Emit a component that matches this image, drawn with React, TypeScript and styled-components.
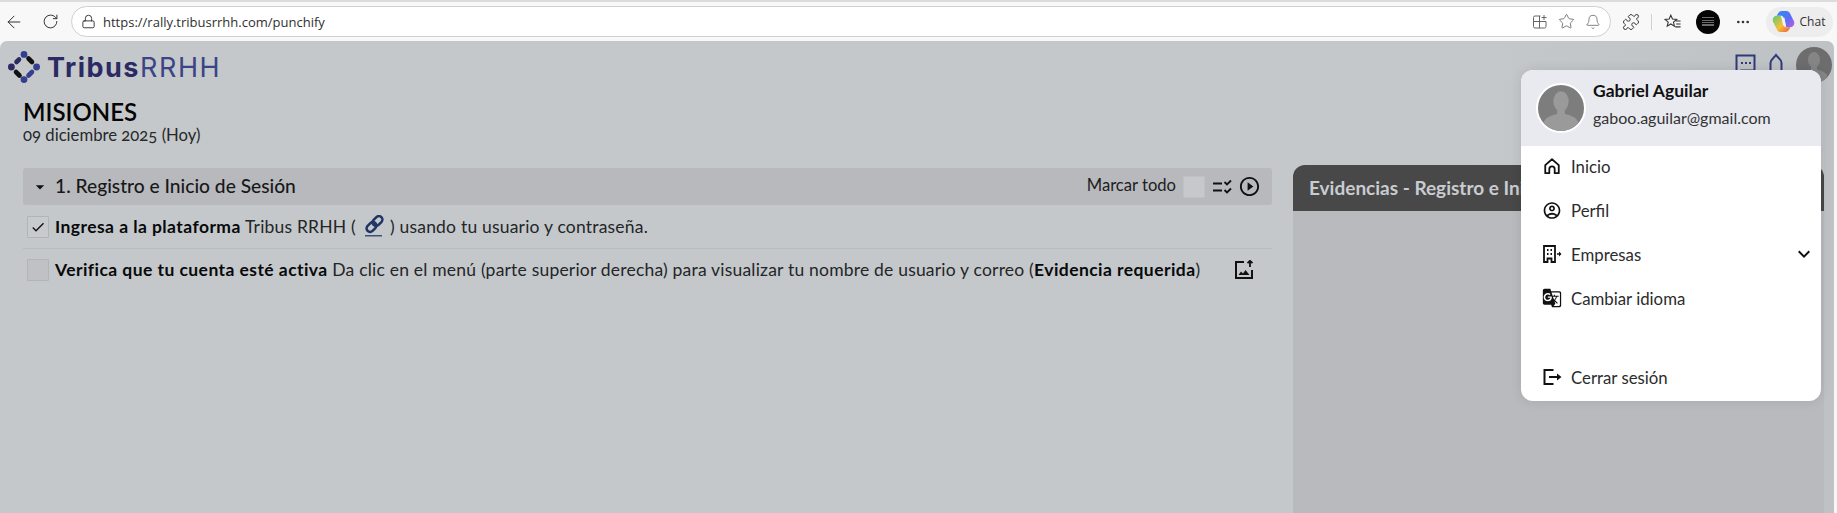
import styled, { createGlobalStyle } from 'styled-components';
import { ArrowLeft, RotateCw, Lock, Star, Bell, Puzzle, Ellipsis } from 'lucide-react';
import {
  MdArrowDropDown,
  MdCheck,
  MdExpandMore,
  MdGTranslate,
  MdOutlineAccountCircle,
  MdPlayCircleOutline,
} from 'react-icons/md';

const FONT = `'Lato', 'Open Sans', sans-serif`;

const GlobalStyle = createGlobalStyle`
  html, body { margin: 0; padding: 0; background: #f7f7f7; overflow: hidden; }
  * { box-sizing: border-box; }
`;

// ---------- browser chrome ----------
const Frame = styled.div`
  width: 1837px;
  height: 513px;
  display: flex;
  flex-direction: column;
  font-family: ${FONT};
  position: relative;
  overflow: hidden;
`;

const Chrome = styled.div`
  height: 41px;
  flex: none;
  background: #f8f8f8;
  border-top: 2px solid #dcdcdc;
  display: flex;
  align-items: center;
  padding: 0 4px 0 4px;
  color: #333;
  font-family: 'Open Sans', sans-serif;
`;

const ChromeBtn = styled.span<{ $w?: number; $ml?: number }>`
  width: ${({ $w }) => $w ?? 36}px;
  margin-left: ${({ $ml }) => $ml ?? 0}px;
  display: flex;
  justify-content: center;
  align-items: center;
  flex: none;
`;

const AddressBar = styled.div`
  width: 1540px;
  height: 31px;
  flex: none;
  background: #fff;
  border: 1px solid #d0d0d0;
  border-radius: 16px;
  display: flex;
  align-items: center;
  padding: 0 9px 0 9px;
  font-family: 'Open Sans', sans-serif;
`;

const Url = styled.span`
  flex: 1;
  margin-left: 7px;
  font-size: 13px;
  color: #303030;
`;

const BarIcons = styled.div`
  display: flex;
  align-items: center;
  gap: 10px;
  color: #666;
`;

const Separator = styled.span`
  width: 1px;
  height: 16px;
  background: #d0d0d0;
  margin-right: 12px;
  flex: none;
`;

const ProfileDot = styled.span`
  width: 24px;
  height: 24px;
  border-radius: 50%;
  background: #050505;
  margin-left: 14px;
  display: flex;
  align-items: center;
  justify-content: center;
  flex: none;

  &::after {
    content: '';
    width: 12px;
    height: 10px;
    background: repeating-linear-gradient(#6a6a6a 0 1px, #050505 1px 2.5px);
  }
`;

const ChatPill = styled.div`
  width: 69px;
  height: 30px;
  margin-left: auto;
  border-radius: 15px;
  background: #ededed;
  display: flex;
  align-items: center;
  gap: 5px;
  padding-left: 6px;
  font-family: 'Open Sans', sans-serif;
  font-size: 12px;
  color: #333;
`;

// ---------- page ----------
const Page = styled.div`
  flex: 1;
  margin-right: 3px;
  background: linear-gradient(90deg, #c4c8cb 0%, #c4c8cb 80%, #bfc2c5 100%);
  border-radius: 7px 7px 0 0;
  padding: 6px 2px 0 8px;
  min-height: 0;
`;

const TopBar = styled.div`
  display: flex;
  align-items: center;
  height: 36px;
`;

const Logo = styled.div`
  display: flex;
  align-items: center;
  gap: 7px;
  flex: 1;
  margin-top: 4px;
`;

const LogoText = styled.span`
  font-family: 'Inter', sans-serif;
  font-size: 27px;
  letter-spacing: 1.5px;
  line-height: 1;
  font-weight: 700;
  color: #2c2a63;
`;

const LogoLight = styled.span`
  font-weight: 400;
  letter-spacing: 1.6px;
  color: #3a4486;
`;

const TopIcons = styled.div`
  display: flex;
  align-items: center;
  gap: 13px;
  color: #2f3a78;
`;

const TopAvatar = styled.div`
  width: 36px;
  height: 36px;
  border-radius: 50%;
  background: #6d6d6d;
  overflow: hidden;
`;

const Heading = styled.div`
  padding-left: 15px;
  margin-top: 15px;
`;

const Title = styled.h1`
  margin: 0;
  font-size: 24px;
  line-height: 27px;
  font-weight: 600;
  color: #050505;
`;

const DateText = styled.div`
  font-size: 16.7px;
  line-height: 19px;
  margin-top: 1px;
  color: #26282a;
  font-variant-numeric: oldstyle-nums;
`;

const Content = styled.div`
  display: flex;
  align-items: flex-start;
  margin-top: 20px;
  padding-left: 15px;
`;

const Missions = styled.div`
  width: 1249px;
  flex: none;
  margin-top: 3px;
`;

const SectionHeader = styled.div`
  height: 37px;
  background: #b8b9bc;
  border-radius: 3px;
  display: flex;
  align-items: center;
  padding: 0 11px 0 7px;
`;

const SectionTitle = styled.span`
  flex: 1;
  margin-left: 5px;
  padding-bottom: 3px;
  font-size: 19.2px;
  font-weight: 500;
  color: #17181a;
`;

const MarkAll = styled.span`
  font-size: 16.6px;
  padding-bottom: 3px;
  color: #1c1d1f;
  margin-right: 7px;
`;

const Box = styled.span<{ $checked?: boolean }>`
  width: 22px;
  height: 22px;
  flex: none;
  display: inline-flex;
  align-items: center;
  justify-content: center;
  border: 1px solid #b2b4b7;
  border-radius: 1px;
  background: ${({ $checked }) => ($checked ? '#c8cbce' : '#c0c1c4')};
  color: #111;
`;

const HeaderBox = styled(Box)`
  background: #c6c8cb;
  border-color: #bfc1c3;
`;

const HeaderIcons = styled.span`
  display: flex;
  align-items: center;
  gap: 6px;
  margin-left: 7px;
  color: #111;
`;

const Task = styled.div<{ $divider?: boolean }>`
  display: flex;
  align-items: center;
  gap: 6px;
  padding: 10px 0 10px 4px;
  height: ${({ $divider }) => ($divider ? 44 : 42)}px;
  border-bottom: ${({ $divider }) => ($divider ? '1px solid #b9bbbe' : 'none')};
  font-size: 17.5px;
  letter-spacing: 0.2px;
  color: #232527;
`;

const TaskText = styled.span`
  flex: 1;
  display: flex;
  align-items: center;
  white-space: pre;
  padding-bottom: 1px;

  b {
    font-weight: 700;
    letter-spacing: 0.44px;
    color: #08090a;
  }
`;

const LinkMark = styled.svg`
  margin: 0 6px 0 8px;
`;

const UploadBtn = styled.span`
  display: flex;
  margin-right: 18px;
  color: #111;
`;

const EvidencePanel = styled.div`
  width: 531px;
  height: 400px;
  margin-left: 21px;
  flex: none;
  border-radius: 12px 12px 0 0;
  background: #b9babd;
  overflow: hidden;
`;

const EvidenceHeader = styled.div`
  height: 46px;
  background: #484848;
  color: #c8ccd0;
  font-size: 19px;
  font-weight: 700;
  line-height: 46px;
  padding-left: 16px;
`;

// ---------- user menu ----------
const Menu = styled.div`
  position: absolute;
  left: 1521px;
  top: 70px;
  width: 300px;
  height: 331px;
  border-radius: 12px;
  background: #fff;
  box-shadow: 0 0 12px rgba(0, 0, 0, 0.1);
  overflow: hidden;
  display: flex;
  flex-direction: column;
`;

const MenuHeader = styled.div`
  height: 76px;
  flex: none;
  background: #e8eaef;
  display: flex;
  align-items: center;
  padding-left: 15px;
  gap: 7px;
`;

const MenuAvatar = styled.div`
  width: 50px;
  height: 50px;
  border-radius: 50%;
  border: 2px solid #fff;
  background: #7d7d7d;
  overflow: hidden;
  flex: none;
`;

const UserName = styled.div`
  font-size: 17.5px;
  font-weight: 700;
  color: #111;
  line-height: 20px;
  margin-top: -8px;
`;

const UserMail = styled.div`
  font-size: 16px;
  color: #333;
  line-height: 20px;
  margin-top: 7px;
`;

const MenuList = styled.div`
  display: flex;
  flex-direction: column;
  margin-top: -2px;
`;

const MenuItem = styled.div<{ $gapTop?: number }>`
  height: 44px;
  margin-top: ${({ $gapTop }) => $gapTop ?? 0}px;
  display: flex;
  align-items: center;
  padding: 0 5px 0 21px;
  font-size: 16.8px;
  color: #2c2c2c;
`;

const MenuIcon = styled.span`
  width: 20px;
  height: 20px;
  display: flex;
  align-items: center;
  justify-content: center;
  color: #111;
  flex: none;
`;

const MenuLabel = styled.span`
  flex: 1;
  margin-left: 9px;
`;

// ---------- drawings ----------
const Silhouette = ({ size, fill }: { size: number; fill: string }) => (
  <svg width={size} height={size} viewBox="0 0 48 48">
    <ellipse cx="24" cy="17" rx="8" ry="10.5" fill={fill} />
    <path d="M20 25v5c-5 2-12 3-14 9v9h36v-9c-2-6-9-7-14-9v-5z" fill={fill} />
  </svg>
);

const LogoMark = () => (
  <svg width="32" height="32" viewBox="0 0 32 32" strokeWidth="4.600" strokeLinecap="round">
    <circle cx="16" cy="3.400" r="3.400" fill="#34408f" />
    <circle cx="16" cy="28.600" r="3.400" fill="#34408f" />
    <circle cx="3.400" cy="16" r="3.400" fill="#2c2a63" />
    <circle cx="28.600" cy="16" r="3.400" fill="#34408f" />
    <path d="M20.500 7.500l3.500 3.500" stroke="#111" />
    <path d="M8 21l3.500 3.500" stroke="#111" />
    <path d="M8.500 11l2.500-2.500" stroke="#2c2a63" />
    <path d="M20.500 24.500l3.500-3.500" stroke="#34408f" />
  </svg>
);

const CopilotMark = () => (
  <svg width="23" height="23" viewBox="0 0 24 24">
    <defs>
      <linearGradient id="cpA" x1="0" y1="0" x2="1" y2="1">
        <stop offset="0" stopColor="#2f8df0" />
        <stop offset="0.6" stopColor="#5f6cf5" />
        <stop offset="1" stopColor="#c25ae8" />
      </linearGradient>
      <linearGradient id="cpB" x1="0" y1="0" x2="1" y2="1">
        <stop offset="0" stopColor="#58c878" />
        <stop offset="0.55" stopColor="#f2c23a" />
        <stop offset="1" stopColor="#f0563c" />
      </linearGradient>
    </defs>
    <path d="M9 1h6c2 0 3 1 4 3l4 8c1 3-1 6-4 6h-4l-3-10c-.5-1.500-1-2-3-2H5c1-3 3-5 5-5z" fill="url(#cpA)" />
    <path d="M15 23H9c-2 0-3-1-4-3l-4-8c-1-3 1-6 4-6h4l3 10c.5 1.500 1 2 3 2h4c-1 3-3 5-5 5z" fill="url(#cpB)" />
    <path d="M10.500 8h2.500l1.500 8h-3z" fill="#f4f4f4" />
  </svg>
);

const SplitPlus = () => (
  <svg width="16" height="16" viewBox="0 0 16 16" fill="none" stroke="currentColor" strokeWidth="1">
    <path d="M8.500 2H3a1.500 1.500 0 0 0-1.500 1.500v9A1.500 1.500 0 0 0 3 14h9.500a1.500 1.500 0 0 0 1.500-1.500V7.500H1.500M7.500 2v12M12 1v5M9.500 3.500h5" />
  </svg>
);

const FavoritesList = () => (
  <svg width="18" height="18" viewBox="0 0 18 18" fill="none" stroke="currentColor" strokeWidth="1.100">
    <path d="M7 2l1.700 4 4.300.3-3.300 2.800 1 4.200L7 11l-3.700 2.300 1-4.200L1 6.300 5.300 6zM12 8h5M12.500 11h4.500M11.500 14h5.500" />
  </svg>
);

const ChatSquare = () => (
  <svg width="21" height="22" viewBox="0 0 21 22" fill="none" stroke="currentColor" strokeWidth="2">
    <path d="M1.500 1.500h18v15H6l-4.500 4z" />
    <path d="M6 9h2M10 9h2M14 9h2" />
  </svg>
);

const TopBell = () => (
  <svg width="14" height="24" viewBox="0 0 14 24" fill="none" stroke="currentColor" strokeWidth="2">
    <path d="M1.500 20V10C1.500 6 5 5 7 2c2 3 5.500 4 5.500 8v10z" />
  </svg>
);

const LinkGlyph = () => (
  <LinkMark width="20" height="22" viewBox="0 0 20 22" fill="none" stroke="#1f3366" strokeWidth="2.500">
    <rect x="8" y="2.500" width="11" height="7" rx="3.500" transform="rotate(-45 13.500 6)" />
    <rect x="2" y="8.500" width="11" height="7" rx="3.500" transform="rotate(-45 7.500 12)" />
    <path d="M1 20.800h17" strokeWidth="1.200" />
  </LinkMark>
);

const ChecksLeftLines = () => (
  <svg width="20" height="16" viewBox="0 0 20 16" fill="none" stroke="currentColor" strokeWidth="2">
    <path d="M1 4.500h9M1 11.500h9" />
    <path d="M12.500 3l2.500 2.500L19 1.500M12.500 11l2.500 2.500 4-4" strokeWidth="1.800" />
  </svg>
);

const UploadImage = () => (
  <svg width="20" height="20" viewBox="0 0 20 20" fill="none" stroke="currentColor" strokeWidth="2">
    <path d="M10 2H2v16h16v-8" />
    <path d="M16 7V1M13.500 3.200L16 .8l2.500 2.400" strokeWidth="1.800" />
    <path d="M4.500 15l2.500-3.500 2 2 2.500-3.500L15.500 15z" fill="currentColor" stroke="none" />
  </svg>
);

const HomeOutline = () => (
  <svg width="18" height="18" viewBox="0 0 20 20" fill="none" stroke="currentColor" strokeWidth="2" strokeLinejoin="round">
    <path d="M2.500 9L10 2.500 17.500 9v9H13v-4.500a3 3 0 0 0-6 0V18H2.500z" />
  </svg>
);

const CompanySwitch = () => (
  <svg width="20" height="20" viewBox="0 0 20 20" fill="none" stroke="currentColor" strokeWidth="1.800">
    <path d="M2 18V2h11v16H9.500v-3.500h-4V18z" />
    <path d="M5 6h1.500M8.500 6H10M5 10h1.500M8.500 10H10" strokeWidth="2" />
    <path d="M15 10h3" strokeWidth="1.500" />
    <path d="M17 7.500l2.500 2.500-2.500 2.500z" fill="currentColor" stroke="none" />
  </svg>
);

const LogoutBracket = () => (
  <svg width="20" height="20" viewBox="0 0 20 20" fill="none" stroke="currentColor" strokeWidth="2">
    <path d="M11.500 3H2.500v14h9" />
    <path d="M7 10h9" />
    <path d="M15 6.500l4.500 3.500-4.500 3.500z" fill="currentColor" stroke="none" />
  </svg>
);

const menuItems = [
  { label: 'Inicio', icon: <HomeOutline /> },
  { label: 'Perfil', icon: <MdOutlineAccountCircle size={21} /> },
  { label: 'Empresas', icon: <CompanySwitch />, chevron: true },
  { label: 'Cambiar idioma', icon: <MdGTranslate size={20} /> },
];

export default function App() {
  return (
    <Frame>
      <GlobalStyle />
      <Chrome>
        <ChromeBtn $w={20}><ArrowLeft size={22} strokeWidth={1.200} /></ChromeBtn>
        <ChromeBtn $w={42} $ml={5}><RotateCw size={17} strokeWidth={1.400} /></ChromeBtn>
        <AddressBar>
          <Lock size={15} strokeWidth={1.500} />
          <Url>https://rally.tribusrrhh.com/punchify</Url>
          <BarIcons>
            <SplitPlus />
            <Star size={17} strokeWidth={1.200} />
            <Bell size={16} strokeWidth={1.200} />
          </BarIcons>
        </AddressBar>
        <ChromeBtn $w={40}><Puzzle size={18} strokeWidth={1.300} /></ChromeBtn>
        <Separator />
        <FavoritesList />
        <ProfileDot />
        <ChromeBtn $w={46}><Ellipsis size={16} /></ChromeBtn>
        <ChatPill><CopilotMark />Chat</ChatPill>
      </Chrome>

      <Page>
        <TopBar>
          <Logo>
            <LogoMark />
            <LogoText>Tribus<LogoLight>RRHH</LogoLight></LogoText>
          </Logo>
          <TopIcons>
            <ChatSquare />
            <TopBell />
            <TopAvatar><Silhouette size={36} fill="#858585" /></TopAvatar>
          </TopIcons>
        </TopBar>
        <Heading>
          <Title>MISIONES</Title>
          <DateText>09 diciembre 2025 (Hoy)</DateText>
        </Heading>
        <Content>
          <Missions>
            <SectionHeader>
              <MdArrowDropDown size={20} color="#111" />
              <SectionTitle>1. Registro e Inicio de Sesión</SectionTitle>
              <MarkAll>Marcar todo</MarkAll>
              <HeaderBox />
              <HeaderIcons>
                <ChecksLeftLines />
                <MdPlayCircleOutline size={23} />
              </HeaderIcons>
            </SectionHeader>
            <Task $divider>
              <Box $checked><MdCheck size={16} /></Box>
              <TaskText>
                <b>Ingresa a la plataforma</b> Tribus RRHH (<LinkGlyph />) usando tu usuario y contraseña.
              </TaskText>
            </Task>
            <Task>
              <Box />
              <TaskText>
                <b>Verifica que tu cuenta esté activa</b> Da clic en el menú (parte superior derecha) para visualizar tu nombre de usuario y correo (<b>Evidencia requerida</b>)
              </TaskText>
              <UploadBtn><UploadImage /></UploadBtn>
            </Task>
          </Missions>
          <EvidencePanel>
            <EvidenceHeader>Evidencias - Registro e Inicio de Sesión</EvidenceHeader>
          </EvidencePanel>
        </Content>
      </Page>

      <Menu>
        <MenuHeader>
          <MenuAvatar><Silhouette size={46} fill="#9a9a9a" /></MenuAvatar>
          <div>
            <UserName>Gabriel Aguilar</UserName>
            <UserMail>gaboo.aguilar@gmail.com</UserMail>
          </div>
        </MenuHeader>
        <MenuList>
          {menuItems.map(({ label, icon, chevron }) => (
            <MenuItem key={label}>
              <MenuIcon>{icon}</MenuIcon>
              <MenuLabel>{label}</MenuLabel>
              {chevron && <MdExpandMore size={24} color="#111" />}
            </MenuItem>
          ))}
          <MenuItem $gapTop={35}>
            <MenuIcon><LogoutBracket /></MenuIcon>
            <MenuLabel>Cerrar sesión</MenuLabel>
          </MenuItem>
        </MenuList>
      </Menu>
    </Frame>
  );
}
